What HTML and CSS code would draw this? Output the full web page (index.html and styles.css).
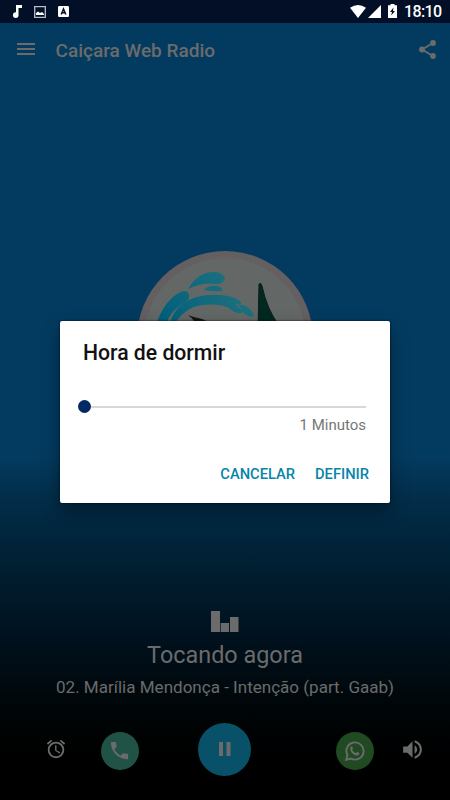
FILE: index.html
```html
<!DOCTYPE html>
<html lang="pt-BR">
<head>
<meta charset="utf-8">
<title>Caiçara Web Radio</title>
<link rel="stylesheet" href="styles.css">
</head>
<body>
<div class="screen">
  <header class="status">
    <svg class="note" width="9" height="13" viewBox="0 0 9 13"><path d="M3 0h6v3H5.500v7A2.800 2.800 0 1 1 3 7.300z"/></svg>
    <svg class="photo" width="12" height="12" viewBox="0 0 12 12"><path fill="none" stroke="#b8bcc5" stroke-width="1.300" d="M.7.7h10.600v10.600H.7z"/><path d="M2 9V7l2-1.500L6 7l2-1 2 2v1z"/></svg>
    <svg class="letter" width="11" height="11" viewBox="0 0 11 11"><rect width="11" height="11" rx="1.200"/><path fill="none" stroke="#020f26" stroke-width="1.500" d="M3.200 8.500L5.500 3l2.300 5.500M4 6.700h3"/></svg>
    <span class="grow"></span>
    <svg class="wifi" width="16" height="13" viewBox="0 0 16 13"><path d="M0 2.700Q8-2.700 16 2.700L8 13z"/></svg>
    <svg class="signal" width="13" height="13" viewBox="0 0 13 13"><path d="M13 0v13H0z"/></svg>
    <svg class="battery" width="9" height="14" viewBox="0 0 9 14"><path d="M2.500 0h4v1.300H9V14H0V1.300h2.500z"/><path fill="#020f26" d="M5.500 3.500L2 8h2l-.8 3.500L7 7H5z"/></svg>
    <time>18:10</time>
  </header>

  <nav class="bar">
    <svg class="menu" width="18" height="12" viewBox="0 0 18 12"><path d="M0 0h18v2H0zM0 5h18v2H0zM0 10h18v2H0z"/></svg>
    <h1>Caiçara Web Radio</h1>
    <svg class="share" width="17" height="19" viewBox="0 0 17 19"><path fill="none" stroke="#6b6b6b" stroke-width="1.900" d="M14 3L3 9.500 14 16"/><circle cx="14" cy="3" r="2.900"/><circle cx="3" cy="9.500" r="2.900"/><circle cx="14" cy="16" r="2.900"/></svg>
  </nav>

  <main class="cover">
    <svg width="176" height="176" viewBox="137 251 176 176">
      <defs><linearGradient id="wave" gradientUnits="userSpaceOnUse" x1="160" y1="320" x2="225" y2="275"><stop offset="0" stop-color="#005f7c"/><stop offset="1" stop-color="#1c707e"/></linearGradient></defs>
      <circle cx="225" cy="339" r="88" fill="#645f60"/>
      <circle cx="225" cy="339" r="81" fill="#636867"/>
      <g fill="url(#wave)">
        <path d="M188 289C194 279 201 273 212 272C222 271 227 277 224 281C220 286 212 283 204 284C197 285 193 287 188 289Z"/>
        <path d="M204 290Q209 285 217 286Q223 287 222 291Q216 292 204 290Z"/>
        <path d="M157 323C161 309 171 295 183 291C190 290 191 298 187 301C177 307 168 314 166 326H156Z"/>
        <path d="M170 324C174 304 193 295 211 295C223 294 237 297 241 302C242 305 238 305 235 304L243 311C242 315 234 313 229 308C222 304 211 304 202 305C189 307 179 315 174 326Z"/>
        <path d="M238 305C245 304 252 309 254 316C250 318 244 315 242 310Z"/>
      </g>
      <path fill="#151515" d="M188 315C197 319 206 317 212 327H196Q195 320 188 315Z"/>
      <path fill="#00291f" stroke="#101c19" d="M258 330L259 284Q261 282 262 286Q267 309 278 324V330Z"/>
    </svg>
  </main>

  <section class="playing">
    <svg width="28" height="21" viewBox="0 0 28 21"><path d="M0 0h9v21H0zM9.700 12H18v9H9.700zM19 6h8.500v15H19z"/></svg>
    <h2>Tocando agora</h2>
    <p>02. Marília Mendonça - Intenção (part. Gaab)</p>
  </section>

  <footer class="controls">
    <svg class="alarm" width="22" height="22" viewBox="0 0 24 24"><path d="M22 5.720l-4.600-3.860-1.290 1.530 4.600 3.860L22 5.720zM7.880 3.390L6.600 1.860 2 5.710l1.290 1.530 4.590-3.850zM12.500 8H11v6l4.750 2.850.75-1.230-4-2.370V8zM12 4a9 9 0 1 0 .001 18.001A9 9 0 0 0 12 4zm0 16a7 7 0 1 1 0-14 7 7 0 0 1 0 14z"/></svg>
    <div class="round phone"><svg width="23" height="23" viewBox="0 0 24 24"><path d="M6.620 10.790c1.440 2.830 3.760 5.140 6.590 6.590l2.200-2.200c.27-.27.67-.36 1.020-.24 1.120.37 2.330.57 3.570.57.550 0 1 .45 1 1V20c0 .55-.45 1-1 1-9.390 0-17-7.610-17-17 0-.55.45-1 1-1h3.500c.55 0 1 .45 1 1 0 1.250.2 2.450.57 3.570.11.350.03.740-.25 1.020l-2.200 2.200z"/></svg></div>
    <div class="round pause"><svg width="12" height="14" viewBox="0 0 12 14"><path d="M0 0h4v14H0zM7.500 0h4v14h-4z"/></svg></div>
    <div class="round whats"><svg width="20" height="20" viewBox="0 0 20 20"><path fill="none" stroke="#6b6b6b" stroke-width="1.900" d="M1.200 18.800l1.300-4.600A8.600 8.600 0 1 1 6 17.600z"/><path d="M7 5.200l1 2.200-.9 1.200c.8 1.700 2 2.800 3.800 3.600l1.200-1.300 2.300 1.100c.1 1.600-1.100 2.600-2.700 2.500C8.300 14 5.400 11 5.200 7.700 5.200 6.500 5.800 5.200 7 5.200z"/></svg></div>
    <svg class="volume" width="25" height="25" viewBox="0 0 24 24"><path d="M3 9v6h4l5 5V4L7 9H3zm13.500 3A4.500 4.500 0 0 0 14 7.970v8.050c1.480-.73 2.500-2.250 2.500-4.020zM14 3.230v2.060c2.890.86 5 3.540 5 6.710s-2.110 5.850-5 6.710v2.060c4.010-.91 7-4.490 7-8.770s-2.990-7.860-7-8.770z"/></svg>
  </footer>

  <div class="overlay">
    <div class="dialog" role="dialog">
      <h3>Hora de dormir</h3>
      <div class="slider"><span class="thumb"></span><span class="track"></span></div>
      <p class="value">1 Minutos</p>
      <div class="actions"><button class="cancel">CANCELAR</button><button class="set">DEFINIR</button></div>
    </div>
  </div>
</div>
</body>
</html>
```
FILE: styles.css
```css
* { box-sizing: border-box; margin: 0; padding: 0; }
body { font-family: Roboto, sans-serif; background: #000; }
svg { display: block; flex: none; fill: #6b6b6b; }

.screen {
  position: relative;
  display: flex;
  flex-direction: column;
  width: 450px;
  height: 800px;
  overflow: hidden;
  color: #6b6b6b;
  background: linear-gradient(#033b60 0, #033b60 455px, #022d49 500px, #001c2d 580px, #00111d 640px, #000507 710px, #000 755px);
}

.status {
  display: flex;
  align-items: center;
  height: 23px;
  padding: 0 8px 0 12.500px;
  background: #020f26;
  color: #fff;
}
.status svg { fill: #fff; }
.photo { margin-left: 12px; }
.letter { margin-left: 12px; }
.grow { flex: 1; }
.signal { margin: 0 7px 0 2px; }
.wifi, .signal { position: relative; top: -.5px; }
.battery { position: relative; top: -.5px; }
.status time { width: 38px; margin-left: 7px; font-size: 16px; font-weight: 500; line-height: 24px; letter-spacing: -.6px; white-space: nowrap; }

.bar { display: flex; align-items: center; height: 54px; padding: 0 14px 0 17px; }
.menu { margin-top: -2px; }
.share { margin-top: -1px; }
.bar h1 { flex: 1; margin: 1px 0 0 20.500px; font-size: 19px; font-weight: 500; line-height: 24px; }

.cover { height: 534px; padding-top: 174px; }
.cover svg { margin: 0 auto; }

.playing { display: flex; flex-direction: column; align-items: center; height: 110px; white-space: nowrap; }
.playing h2 { margin-top: 8px; font-size: 23.400px; font-weight: 400; line-height: 30px; }
.playing p { margin-top: 6px; font-size: 17.050px; line-height: 22px; }

.controls { display: flex; align-items: center; height: 56px; padding-left: 45px; }
.round { display: grid; place-items: center; width: 38px; height: 38px; border-radius: 50%; flex: none; }
.phone { margin: 4px 0 0 34px; background: #205346; }
.phone svg { margin: -1px 1px 0 0; }
.pause { width: 53px; height: 53px; margin-left: 59px; background: #085168; }
.whats { margin: 4px 0 0 85px; background: #204a21; }
.volume { margin-left: 26px; }

.overlay { position: absolute; inset: 23px 0 0; display: grid; justify-content: center; align-content: start; padding-top: 298px; }
.dialog { width: 330px; height: 181.500px; padding: 19px 21px 0 23px; border-radius: 2px; background: #fff; box-shadow: 0 0 2px #000b1b, 0 8px 18px rgba(0, 0, 0, .4); }
.dialog h3 { color: #111; font-size: 21.200px; font-weight: 500; line-height: 26px; white-space: nowrap; }
.slider { display: flex; align-items: center; height: 13px; margin: 34px 0 0 -5px; }
.thumb { width: 13px; height: 13px; border-radius: 50%; background: #032962; }
.track { width: 275px; height: 2px; background: #d8d8d8; flex: none; }
.value { margin: 1px 3px 0 0; color: #777; font-size: 15px; line-height: 22px; text-align: right; }
.actions { display: flex; justify-content: flex-end; gap: 20px; margin-top: 28px; }
.actions button { border: 0; background: none; color: #0784aa; font: 500 14.700px/21px Roboto, sans-serif; }
```
